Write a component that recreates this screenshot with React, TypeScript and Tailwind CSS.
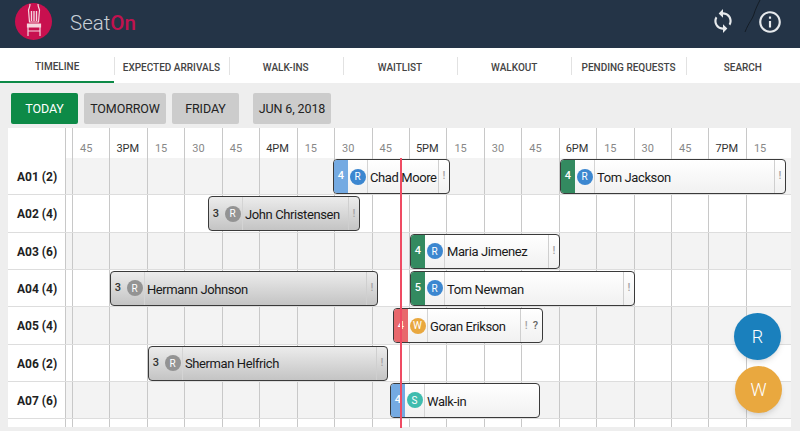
import { MdInfoOutline, MdSync } from "react-icons/md";

const tabs = [
  "TIMELINE",
  "EXPECTED ARRIVALS",
  "WALK-INS",
  "WAITLIST",
  "WALKOUT",
  "PENDING REQUESTS",
  "SEARCH",
];

const times = [
  "45", "3PM", "15", "30", "45", "4PM", "15", "30", "45", "5PM",
  "15", "30", "45", "6PM", "15", "30", "45", "7PM", "15",
];

type Booking = {
  name: string;
  size: number;
  letter: string;
  pos: string;
  kind: "blue" | "green" | "red" | "gray" | "walk";
  extra?: boolean;
};

const rows: { label: string; bookings: Booking[] }[] = [
  {
    label: "A01 (2)",
    bookings: [
      { name: "Chad Moore", size: 4, letter: "R", pos: "left-[325px] w-[117px]", kind: "blue" },
      { name: "Tom Jackson", size: 4, letter: "R", pos: "left-[552px] w-[226px]", kind: "green" },
    ],
  },
  {
    label: "A02 (4)",
    bookings: [{ name: "John Christensen", size: 3, letter: "R", pos: "left-[200px] w-[152px]", kind: "gray" }],
  },
  {
    label: "A03 (6)",
    bookings: [{ name: "Maria Jimenez", size: 4, letter: "R", pos: "left-[402px] w-[150px]", kind: "green" }],
  },
  {
    label: "A04 (4)",
    bookings: [
      { name: "Hermann Johnson", size: 3, letter: "R", pos: "left-[102px] w-[268px]", kind: "gray" },
      { name: "Tom Newman", size: 5, letter: "R", pos: "left-[402px] w-[225px]", kind: "green" },
    ],
  },
  {
    label: "A05 (4)",
    bookings: [{ name: "Goran Erikson", size: 4, letter: "W", pos: "left-[385px] w-[150px]", kind: "red", extra: true }],
  },
  {
    label: "A06 (2)",
    bookings: [{ name: "Sherman Helfrich", size: 3, letter: "R", pos: "left-[140px] w-[240px]", kind: "gray" }],
  },
  {
    label: "A07 (6)",
    bookings: [{ name: "Walk-in", size: 4, letter: "S", pos: "left-[382px] w-[150px]", kind: "walk" }],
  },
];

function ChairLogo() {
  return (
    <div className="ml-[15px] mt-[3px] flex h-[37px] w-[37px] items-center justify-center rounded-full bg-[#c8104f]">
      <svg width="20" height="37" viewBox="0 0 20 37" fill="none" stroke="#f6d5df" strokeWidth="1.2">
        <path d="M6 1c0 3 -1 4 -1.500 6l1 12h9l1 -12c-.5 -2 -1.500 -3 -1.500 -6" />
        <path d="M7.500 8v10M10 8v10M12.500 8v10" strokeWidth="1.400" />
        <path d="M3.500 21h13v3h-13z" fill="#f6d5df" />
        <path d="M4 24v9M16 24v9M4 28h12" />
      </svg>
    </div>
  );
}

function Bar({ b }: { b: Booking }) {
  const gray = b.kind === "gray";
  const stripe =
    b.kind === "blue"
      ? "bg-[#74aae2] text-white"
      : b.kind === "walk"
        ? "bg-[#74aae2] text-white"
        : b.kind === "green"
          ? "bg-[#338a60] text-white"
          : b.kind === "red"
            ? "bg-[#e8686c] text-white"
            : "text-[#333333]";
  const circle = gray
    ? "bg-[#939393]"
    : b.kind === "red"
      ? "bg-[#e9a83f]"
      : b.kind === "walk"
        ? "bg-[#3fbcae]"
        : "bg-[#3c87d0]";
  return (
    <div
      className={`absolute top-[1px] flex h-[35px] items-center overflow-hidden rounded-[4px] border border-[#3a3a3a] ${b.pos} ${
        gray ? "bg-gradient-to-b from-[#ececec] to-[#c4c4c4]" : "bg-gradient-to-b from-white to-[#f1f1f1]"
      }`}
    >
      <div className={`flex h-full w-[14px] shrink-0 items-center justify-center text-[11px] font-medium ${stripe}`}>
        {b.size}
      </div>
      <div className="flex h-full w-[20px] shrink-0 items-center justify-center border-r border-[#d4d4d4]">
        <div className={`flex h-[16px] w-[16px] items-center justify-center rounded-full text-[10px] text-white ${circle}`}>
          {b.letter}
        </div>
      </div>
      <div className="min-w-0 flex-1 whitespace-nowrap pl-[2px] pt-[2px] text-[13px] tracking-[-0.4px] text-[#1a1a1a]">
        {b.name}
      </div>
      {b.kind !== "walk" && (
        <div
          className={`flex h-full shrink-0 items-center justify-center gap-[5px] border-l border-[#cfcfcf] text-[11px] font-medium text-[#a5a5a5] ${
            b.extra ? "w-[22px]" : "w-[11px]"
          }`}
        >
          <span>!</span>
          {b.extra && <span className="text-[#666666]">?</span>}
        </div>
      )}
    </div>
  );
}

function Cells() {
  return (
    <div className="flex h-full flex-1">
      <div className="h-full w-[7px] border-l border-[#c8c8c8]" />
      {times.map((_, i) => (
        <div key={i} className="h-full w-[37.45px] shrink-0 border-l border-[#c8c8c8]" />
      ))}
    </div>
  );
}

export default function App() {
  return (
    <div className="relative flex h-[431px] w-[800px] flex-col overflow-hidden bg-[#eeeeee] font-['Roboto',sans-serif]">
      <header className="flex h-[48px] shrink-0 items-start bg-[#243447]">
        <ChairLogo />
        <div className="ml-[18px] mt-[8px] text-[20.5px] leading-[30px] font-light text-[#c9d0d7]">
          Seat<span className="font-medium text-[#c0124f]">On</span>
        </div>
        <div className="ml-auto flex items-start">
          <MdSync className="mt-[8px] text-[#e6e9ec]" size={26} />
          <svg width="22" height="34" viewBox="0 0 22 34" fill="none" stroke="#10161d" strokeWidth="0.8" className="ml-[8px] -mr-[9px]">
            <path d="M1 32C5 22 8 20 10 14C11 10 14 4 16 0" />
          </svg>
          <MdInfoOutline className="mr-[17px] mt-[9px] text-[#e6e9ec]" size={26} />
        </div>
      </header>

      <nav className="flex h-[35px] shrink-0 bg-white">
        {tabs.map((t, i) => (
          <div
            key={t}
            className={`relative flex h-full flex-1 items-center justify-center pt-[3px] text-[10px] font-medium text-[#444444] ${
              i === 0 ? "border-b-2 border-[#0d8a47]" : ""
            }`}
          >
            {i > 0 && <span className="absolute left-0 top-[9px] h-[18px] w-px bg-[#e2e2e2]" />}
            {t}
          </div>
        ))}
      </nav>

      <div className="flex h-[45px] shrink-0 items-center pl-[11px] pt-[6px] text-[12.5px] tracking-[-0.1px]">
        <button className="h-[31px] w-[67px] rounded-[2px] bg-[#0d8a47] pt-[1px] text-white">TODAY</button>
        <button className="ml-[6px] h-[31px] w-[82px] rounded-[2px] bg-[#cccccc] pt-[1px] text-[#222222]">TOMORROW</button>
        <button className="ml-[6px] h-[31px] w-[67px] rounded-[2px] bg-[#cccccc] pt-[1px] text-[#222222]">FRIDAY</button>
        <button className="ml-[14px] h-[31px] w-[78px] rounded-[2px] bg-[#cccccc] pt-[1px] text-[#222222]">JUN 6, 2018</button>
      </div>

      <div className="ml-[8px] w-[783px] bg-white">
        <div className="flex h-[30px]">
          <div className="w-[57px] shrink-0" />
          <div className="h-full w-[7px] border-l border-[#c8c8c8]" />
          {times.map((t, i) => (
            <div
              key={i}
              className={`flex h-full w-[37.45px] shrink-0 items-center border-l border-[#c8c8c8] pt-[12px] text-[11px] ${
                t.endsWith("PM") ? "pl-[6px] text-[#333333]" : "pl-[7px] text-[#888888]"
              }`}
            >
              {t}
            </div>
          ))}
        </div>
        {rows.map((r, i) => (
          <div
            key={r.label}
            className={`relative flex h-[37.33px] border-b border-[#dddddd] ${i % 2 === 0 ? "bg-[#f3f3f3]" : "bg-white"}`}
          >
            <div className="flex h-full w-[57px] shrink-0 items-center bg-white pl-[9px] pt-[2px] text-[12px] font-bold text-[#222222]">
              {r.label}
            </div>
            <Cells />
            {r.bookings.map((b) => (
              <Bar key={b.name} b={b} />
            ))}
          </div>
        ))}
        <div className="flex h-[8px]">
          <div className="w-[57px] shrink-0" />
          <Cells />
        </div>
      </div>

      {/* now marker */}
      <div className="absolute left-[400px] top-[158px] h-[270px] w-[2px] bg-[#ef4b63]" />

      <div className="absolute left-[734px] top-[313px] flex h-[47px] w-[47px] items-center justify-center rounded-full bg-[#1a80bd] text-[18px] font-light text-white shadow-md">
        R
      </div>
      <div className="absolute left-[735px] top-[366px] flex h-[47px] w-[47px] items-center justify-center rounded-full bg-[#e9a83f] text-[18px] font-light text-white shadow-md">
        W
      </div>
    </div>
  );
}
